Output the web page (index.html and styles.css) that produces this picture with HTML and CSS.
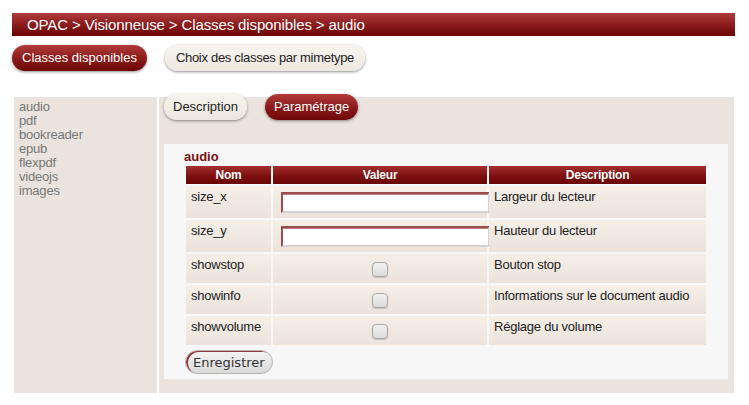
FILE: index.html
```html
<!DOCTYPE html>
<html lang="fr">
<head>
<meta charset="utf-8">
<title>OPAC - Visionneuse</title>
<link rel="stylesheet" href="styles.css">
</head>
<body>
<div class="page">
  <div class="titlebar">OPAC &gt; Visionneuse &gt; Classes disponibles &gt; audio</div>
  <div class="menu">
    <span class="pill pill-red">Classes disponibles</span>
    <span class="pill pill-light pill-narrow">Choix des classes par mimetype</span>
  </div>
  <div class="main">
    <div class="sidebar">
      <div class="item">audio</div>
      <div class="item">pdf</div>
      <div class="item">bookreader</div>
      <div class="item">epub</div>
      <div class="item">flexpdf</div>
      <div class="item">videojs</div>
      <div class="item">images</div>
    </div>
    <div class="content">
      <div class="tabs">
        <span class="pill pill-light tab">Description</span>
        <span class="pill pill-red tab">Paramétrage</span>
      </div>
      <div class="box">
        <div class="heading">audio</div>
        <table class="params">
          <colgroup><col class="c1"><col class="c2"><col class="c3"></colgroup>
          <thead>
            <tr><th>Nom</th><th>Valeur</th><th>Description</th></tr>
          </thead>
          <tbody>
            <tr><td>size_x</td><td><input class="txt" type="text"></td><td>Largeur du lecteur</td></tr>
            <tr><td>size_y</td><td><input class="txt" type="text"></td><td>Hauteur du lecteur</td></tr>
            <tr><td>showstop</td><td><input class="chk" type="checkbox"></td><td>Bouton stop</td></tr>
            <tr><td>showinfo</td><td><input class="chk" type="checkbox"></td><td>Informations sur le document audio</td></tr>
            <tr><td>showvolume</td><td><input class="chk" type="checkbox"></td><td>Réglage du volume</td></tr>
          </tbody>
        </table>
        <button class="save" type="button">Enregistrer</button>
      </div>
    </div>
  </div>
</div>
</body>
</html>
```
FILE: styles.css
```css
html, body {
  margin: 0;
  padding: 0;
  background: #ffffff;
}
body {
  font-family: "Liberation Sans", Arial, sans-serif;
  font-size: 13px;
  color: #222;
}
.page {
  padding-top: 13px;
}
.titlebar {
  margin: 0 14px 0 12px;
  height: 23px;
  line-height: 23px;
  padding-left: 15px;
  font-size: 15px;
  letter-spacing: -0.12px;
  color: #fff;
  background: linear-gradient(#b13c3c, #8f1f1f 45%, #6c0505);
}
.menu {
  display: flex;
  gap: 18px;
  margin: 9px 0 0 12px;
}
.pill {
  display: inline-block;
  height: 26px;
  line-height: 26px;
  padding: 0 10px;
  border-radius: 13px;
  font-size: 13px;
  box-shadow: 0 1px 3px rgba(0, 0, 0, 0.45);
  box-sizing: border-box;
}
.pill-red {
  color: #fff;
  background: linear-gradient(#b23b3b, #8c1c1c 50%, #6d0707);
}
.pill-light {
  color: #222;
  background: linear-gradient(#f7f4ef, #ede7df);
}
.pill-narrow {
  letter-spacing: -0.3px;
  padding: 0 11px;
}
.main {
  display: flex;
  gap: 2px;
  margin: 26px 15px 0 14px;
}
.sidebar {
  width: 143px;
  flex: none;
  background: #ebe4de;
  padding: 3px 0 0 5px;
  box-sizing: border-box;
  letter-spacing: -0.2px;
}
.item {
  color: #777;
  line-height: 14px;
}
.content {
  flex: 1;
  background: #ebe4de;
  padding: 0 6px 14px 5px;
}
.tabs {
  display: flex;
  gap: 18px;
  margin-top: -3px;
}
.tab {
  padding: 0 9px;
}
.box {
  margin-top: 24px;
  background: #f7f7f7;
  padding: 6px 20px 5px 20px;
}
.heading {
  font-weight: bold;
  color: #7b1111;
  line-height: 14px;
}
.params {
  border-spacing: 2px;
  table-layout: fixed;
  width: 524px;
  letter-spacing: -0.23px;
}
.c1 { width: 85px; }
.c2 { width: 214px; }
.c3 { width: 217px; }
.params th {
  height: 18px;
  padding: 0;
  font-size: 12px;
  font-weight: bold;
  color: #fff;
  text-align: center;
  background: linear-gradient(#a63030, #7d1010 55%, #6a0505);
}
.params td {
  padding: 3px 5px;
  vertical-align: top;
  line-height: 15px;
  background: linear-gradient(#f5efe7, #ebe3dc);
  color: #222;
}
.txt {
  display: block;
  margin: 3px 0 2px 3px;
  width: 209px;
  height: 21px;
  box-sizing: border-box;
  padding: 0;
  background: #fff;
  border-top: 2px solid #9c4c4c;
  border-left: 2px solid #9c4c4c;
  border-right: 2px solid #d2d2d2;
  border-bottom: 2px solid #d2d2d2;
  box-shadow: inset 0 1px 0 #c08080;
}
.chk {
  -webkit-appearance: none;
  appearance: none;
  display: block;
  width: 16px;
  height: 15px;
  margin: 5px auto 3px;
  box-sizing: border-box;
  border: 1px solid #a9a6a3;
  border-radius: 4px;
  background: linear-gradient(#f1f1f1, #dcdcdc);
  box-shadow: 0 1px 1px rgba(0, 0, 0, 0.15);
}
.save {
  display: block;
  margin-top: 3px;
  margin-left: 1px;
  height: 24px;
  padding: 0 7px;
  font-family: "DejaVu Sans", sans-serif;
  font-size: 13px;
  color: #333;
  border: 1px solid #b7b2ae;
  border-radius: 12px;
  background: linear-gradient(#f4f4f4, #d9d9d9);
  box-shadow: inset 2px 1px 0 #8f3a3a;
}
```
